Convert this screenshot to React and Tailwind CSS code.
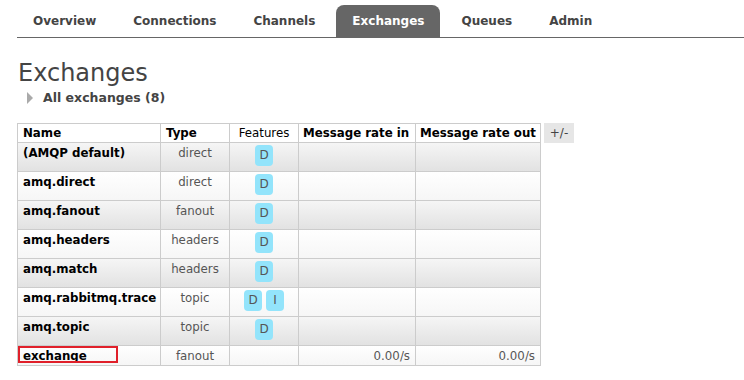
import React from 'react';

const tabs = ['Overview', 'Connections', 'Channels', 'Exchanges', 'Queues', 'Admin'];

const exchanges = [
  { name: '(AMQP default)', type: 'direct', features: ['D'] },
  { name: 'amq.direct', type: 'direct', features: ['D'] },
  { name: 'amq.fanout', type: 'fanout', features: ['D'] },
  { name: 'amq.headers', type: 'headers', features: ['D'] },
  { name: 'amq.match', type: 'headers', features: ['D'] },
  { name: 'amq.rabbitmq.trace', type: 'topic', features: ['D', 'I'] },
  { name: 'amq.topic', type: 'topic', features: ['D'] },
  { name: 'exchange', type: 'fanout', features: [], rateIn: '0.00/s', rateOut: '0.00/s', marked: true },
];

const App = () => {
  return (
    <div className="w-[744px] h-[380px] bg-white overflow-hidden text-[#444]" style={{ fontFamily: '"DejaVu Sans", Verdana, sans-serif' }}>
      {/* nav */}
      <div className="pl-[17px] pt-[5px]">
        <ul className="flex gap-[5px] border-b border-[#666] h-[33px]">
          {tabs.map((t) => (
            <li
              key={t}
              className={`h-[32px] px-4 flex items-center text-[12px] font-bold rounded-t-[8px] ${
                t === 'Exchanges' ? 'bg-[#666] text-white' : 'text-[#444]'
              }`}
            >
              {t}
            </li>
          ))}
        </ul>
      </div>

      {/* heading */}
      <h1 className="ml-[18px] mt-[21px] text-[24px] leading-[28px] text-[#444]">Exchanges</h1>
      <div className="ml-[27px] mt-[2px] flex items-center gap-[10px] text-[12.5px] font-bold text-[#444]">
        <span className="w-0 h-0 border-y-[6px] border-y-transparent border-l-[6px] border-l-[#aaa]" />
        <span>All exchanges (8)</span>
      </div>

      {/* table */}
      <div className="ml-[17px] mt-[15px] flex items-start gap-[3px]">
        <table className="w-[524px] border-collapse table-fixed text-[11.8px] text-black">
          <colgroup>
            <col className="w-[143px]" />
            <col className="w-[69px]" />
            <col className="w-[69px]" />
            <col className="w-[117px]" />
            <col className="w-[125px]" />
          </colgroup>
          <thead>
            <tr className="h-[19px] bg-white">
              <th className="border border-[#ccc] text-left font-bold px-[5px] py-0 leading-[18px]">Name</th>
              <th className="border border-[#ccc] text-left font-bold px-[5px] py-0 leading-[18px]">Type</th>
              <th className="border border-[#ccc] text-center font-normal px-0 py-0 leading-[18px]">Features</th>
              <th className="border border-[#ccc] text-left font-bold px-[4px] py-0 leading-[18px] whitespace-nowrap">Message rate in</th>
              <th className="border border-[#ccc] text-left font-bold px-[4px] py-0 leading-[18px] whitespace-nowrap">Message rate out</th>
            </tr>
          </thead>
          <tbody>
            {exchanges.map((ex, i) => (
              <tr
                key={ex.name}
                className={`${ex.marked ? 'h-[20px]' : 'h-[29px]'} ${
                  i % 2 === 0
                    ? 'bg-gradient-to-b from-[#f6f6f6] to-[#e2e2e2]'
                    : 'bg-gradient-to-b from-[#ffffff] to-[#f6f6f6]'
                }`}
              >
                <td className="relative border border-[#ccc] align-top px-[5px] pt-[2px] leading-[16px] font-bold whitespace-nowrap overflow-visible">
                  {ex.name}
                  {ex.marked && (
                    <div className="absolute left-[0px] top-[0px] w-[100px] h-[17px] border-2 border-[#e0202a]" />
                  )}
                </td>
                <td className="border border-[#ccc] align-top text-center pt-[2px] leading-[16px] text-[#555]">{ex.type}</td>
                <td className="border border-[#ccc] align-top pt-[2px] pb-[4px]">
                  <div className="flex justify-center gap-[4px]">
                    {ex.features.map((f) => (
                      <span
                        key={f}
                        className="w-[18px] h-[21px] rounded-[4px] bg-[#93e4fb] text-[#555] flex items-center justify-center text-[12px]"
                      >
                        {f}
                      </span>
                    ))}
                  </div>
                </td>
                <td className="border border-[#ccc] align-top text-right pr-[5px] pt-[2px] leading-[16px] text-[#555]">{ex.rateIn}</td>
                <td className="border border-[#ccc] align-top text-right pr-[5px] pt-[2px] leading-[16px] text-[#555]">{ex.rateOut}</td>
              </tr>
            ))}
          </tbody>
        </table>
        <div className="w-[30px] h-[20px] bg-[#e6e6e6] text-[12px] text-[#444] flex items-center justify-center">+/-</div>
      </div>
    </div>
  );
};

export default App;
